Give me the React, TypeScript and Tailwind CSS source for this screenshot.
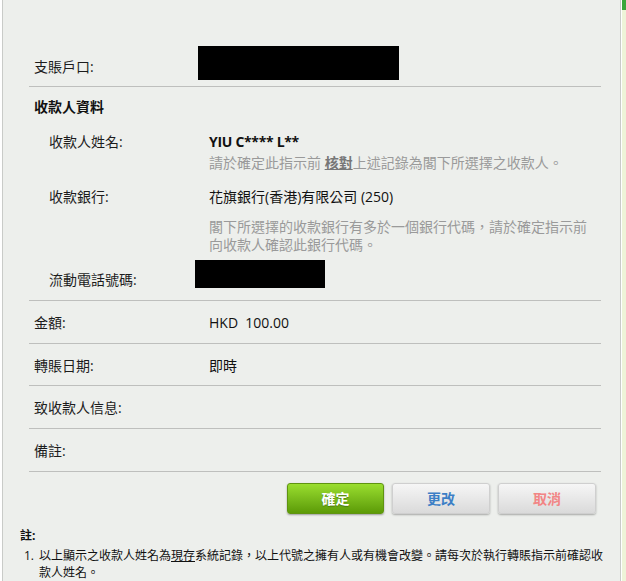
import React from "react";

const font = { fontFamily: '"Open Sans", "Noto Sans CJK TC", sans-serif' };

function Divider() {
  return <div className="ml-[26px] mr-[19px] h-px bg-[#bebfbd]" />;
}

function SimpleRow({ label, value }: { label: string; value?: string }) {
  return (
    <div className="ml-[26px] mr-[19px] h-[42px] pt-[12px] pl-[5px] flex text-[14px] leading-[20px]">
      <div className="w-[175px] text-[#1c1c1c]">{label}</div>
      {value && <div className="text-[#111] whitespace-pre">{value}</div>}
    </div>
  );
}

export default function App() {
  return (
    <div className="w-[626px] h-[581px] flex bg-white overflow-hidden" style={font}>
      <div className="w-[2px] bg-white" />
      <div className="w-[619px] h-full bg-[#edefec] border-l border-r border-[#c9cbc8] flex flex-col">
        {/* 支賬戶口 */}
        <div className="ml-[26px] mr-[19px] pt-[46px] pb-[6px] pl-[5px] flex items-start text-[14px] leading-[20px]">
          <div className="w-[164px] mt-[11px] text-[#1c1c1c]">支賬戶口:</div>
          <div className="w-[201px] h-[34px] bg-black" />
        </div>
        <Divider />
        {/* 收款人資料 */}
        <div className="ml-[31px] mt-[10px] text-[14px] leading-[20px] font-bold text-[#111]">收款人資料</div>
        <div className="ml-[46px] mt-[15px] flex text-[14px] leading-[20px]">
          <div className="w-[160px] text-[#1c1c1c]">收款人姓名:</div>
          <div>
            <div className="font-bold text-[#111] tracking-[-0.3px]">YIU C**** L**</div>
            <div className="mt-[2px] leading-[18px] text-[#9a9a9a]">
              請於確定此指示前 <span className="font-bold text-[#777] underline">核對</span>上述記錄為閣下所選擇之收款人。
            </div>
          </div>
        </div>
        <div className="ml-[46px] mt-[15px] flex text-[14px] leading-[20px]">
          <div className="w-[160px] text-[#1c1c1c]">收款銀行:</div>
          <div>
            <div className="text-[#111]">花旗銀行(香港)有限公司 (250)</div>
            <div className="mt-[11px] w-[390px] leading-[18px] text-[#9a9a9a]">
              閣下所選擇的收款銀行有多於一個銀行代碼，請於確定指示前向收款人確認此銀行代碼。
            </div>
          </div>
        </div>
        <div className="ml-[46px] mt-[6px] mb-[10px] flex items-start text-[14px] leading-[20px]">
          <div className="w-[146px] mt-[10px] text-[#1c1c1c]">流動電話號碼:</div>
          <div className="w-[130px] h-[28px] bg-black" />
        </div>
        <Divider />
        <SimpleRow label="金額:" value="HKD  100.00" />
        <Divider />
        <SimpleRow label="轉賬日期:" value="即時" />
        <Divider />
        <SimpleRow label="致收款人信息:" />
        <Divider />
        <SimpleRow label="備註:" />
        <Divider />
        {/* Buttons */}
        <div className="mt-[11px] mr-[24px] flex justify-end gap-[8px]">
          <button className="w-[97px] h-[31px] rounded-[3px] border border-[#5f9410] bg-gradient-to-b from-[#9ade2e] to-[#5c9b06] text-white font-bold text-[14px] shadow-[0_1px_2px_rgba(0,0,0,0.35)] [text-shadow:0_1px_1px_rgba(0,0,0,0.3)]">
            確定
          </button>
          <button className="w-[98px] h-[31px] rounded-[3px] border border-[#cfcfcf] bg-gradient-to-b from-[#f6f6f6] to-[#dadada] text-[#3d7fc6] font-bold text-[14px] shadow-[0_1px_2px_rgba(0,0,0,0.3)]">
            更改
          </button>
          <button className="w-[98px] h-[31px] rounded-[3px] border border-[#cfcfcf] bg-gradient-to-b from-[#f6f6f6] to-[#dadada] text-[#f28585] font-bold text-[14px] shadow-[0_1px_2px_rgba(0,0,0,0.3)]">
            取消
          </button>
        </div>
        {/* Notes */}
        <div className="ml-[17px] mt-[13px] text-[12px] leading-[18px] font-bold text-[#111]">註:</div>
        <div className="ml-[21px] mr-[14px] mt-[2px] flex text-[12px] leading-[17px] text-[#111]">
          <div className="w-[15px] shrink-0">1.</div>
          <div>
            以上顯示之收款人姓名為<span className="underline">現存</span>系統記錄，以上代號之擁有人或有機會改變。請每次於執行轉賬指示前確認收款人姓名。
          </div>
        </div>
      </div>
      <div className="w-[1px] bg-white" />
      <div className="w-[4px] flex flex-col">
        <div className="h-[10px] bg-[#3aa63a]" />
        <div className="flex-1 bg-[#eef4d8]" />
      </div>
    </div>
  );
}
